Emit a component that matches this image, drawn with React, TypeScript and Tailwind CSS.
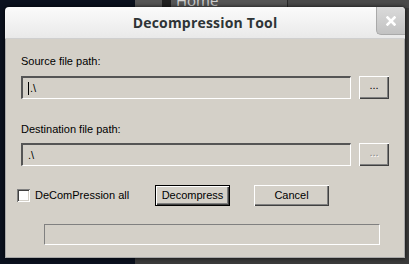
import React from "react";

const raised =
  "shadow-[inset_1px_1px_#ffffff,inset_-1px_-1px_#404040,inset_-2px_-2px_#808080]";
const sunken = "border-t-2 border-l-2 border-t-[#555555] border-l-[#555555] border-b border-r border-b-white border-r-white";

const PathRow: React.FC<{ value: string; caret?: boolean; dim?: boolean }> = ({ value, caret, dim }) => (
  <div className="flex items-center gap-2 h-[23px]">
    <div className={`flex items-center w-[330px] h-[23px] bg-[#d4d0c8] pl-[5px] ${sunken}`}>
      {caret && <span className="w-px h-[13px] bg-black mr-px" />}
      <span className="text-[11px] text-black">{value}</span>
    </div>
    <button className={`w-[30px] h-[23px] bg-[#d4d0c8] flex items-center justify-center text-[11px] pb-1 ${raised}`}>
      <span className={dim ? "text-[#8a8a8a] [text-shadow:1px_1px_#ffffff]" : "text-black"}>...</span>
    </button>
  </div>
);

export default function App() {
  return (
    <div className="relative w-[409px] h-[264px] overflow-hidden bg-[#0b111e] font-['Liberation_Sans',Arial,sans-serif]">
      {/* window behind the dialog */}
      <div className="absolute left-[135px] top-0 w-[274px] h-[264px] bg-[#3a3a3a]">
        <div className="flex h-[8px]">
          <div className="w-[153px] bg-[#565656] border-r border-[#2a2a2a] overflow-hidden">
            <div className="flex items-center gap-[5px] pl-[27px] -mt-[8px] h-[16px] text-[#cfcfcf] text-[15px] leading-[16px] font-['Open_Sans',sans-serif]">
              <span className="w-[9px] h-[9px] bg-[#222] mt-[6px]" />
              <span>Home</span>
            </div>
          </div>
          <div className="flex-1 bg-[#4a4a4a]" />
        </div>
      </div>

      {/* dialog */}
      <div className="absolute left-[5px] top-[7px] w-[400px] h-[251px] flex flex-col rounded-t-[4px] overflow-hidden shadow-[0_0_4px_rgba(0,0,0,0.8)]">
        <div className="relative flex items-center justify-center h-[32px] bg-gradient-to-b from-[#fbfbfb] to-[#e9e9e9] border-b border-[#cfcfcf]">
          <span className="text-[14px] font-bold text-[#2e3436] font-['Open_Sans',sans-serif] tracking-[0.2px]">
            Decompression Tool
          </span>
          <div className="absolute right-0 top-0 w-[29px] h-[28px] bg-gradient-to-b from-[#dadada] to-[#c2c2c2] border-l border-b border-[#a9a9a9] rounded-bl-[5px] flex items-center justify-center">
            <svg width="10" height="10" viewBox="0 0 10 10">
              <path d="M1.5 1.5 L8.5 8.5 M8.5 1.5 L1.5 8.5" stroke="#ffffff" strokeWidth="2.6" strokeLinecap="square" />
            </svg>
          </div>
        </div>

        <div className="flex-1 flex flex-col bg-[#d4d0c8] border-l border-r border-b border-[#a8a8a8] pl-[15px] text-[11px] text-black">
          <div className="mt-[16px] h-[13px] leading-[13px]">Source file path:</div>
          <div className="mt-[8px]">
            <PathRow value=".\" caret />
          </div>
          <div className="mt-[24px] h-[13px] leading-[13px]">Destination file path:</div>
          <div className="mt-[7px]">
            <PathRow value=".\" dim />
          </div>

          <div className="flex items-center mt-[19px] h-[21px]">
            <div className="w-[13px] h-[13px] bg-white ml-[-4px] shadow-[inset_1px_1px_#808080,inset_-1px_-1px_#ffffff,inset_2px_2px_#404040,inset_-2px_-2px_#d4d0c8]" />
            <span className="ml-[5px] w-[120px]">DeComPression all</span>
            <button className={`w-[75px] h-[21px] bg-[#d4d0c8] border border-black text-[11px] ${raised}`}>
              Decompress
            </button>
            <button className={`ml-[24px] w-[75px] h-[21px] bg-[#d4d0c8] text-[11px] ${raised}`}>
              Cancel
            </button>
          </div>

          <div className="mt-[18px] ml-[23px] w-[336px] h-[21px] border-t border-l border-[#808080] border-b border-r border-b-white border-r-white" />
        </div>
      </div>
    </div>
  );
}
